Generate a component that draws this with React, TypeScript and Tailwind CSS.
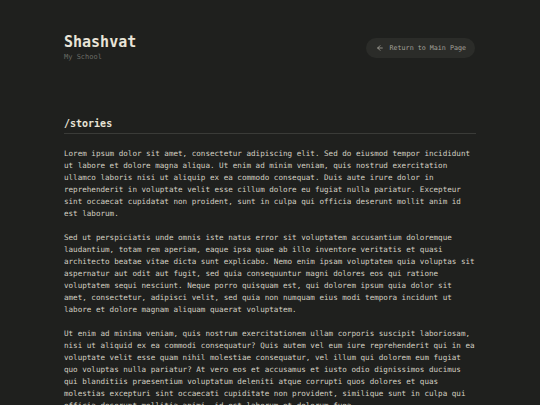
import { ArrowLeft } from "lucide-react";

const paragraphs = [
  "Lorem ipsum dolor sit amet, consectetur adipiscing elit. Sed do eiusmod tempor incididunt ut labore et dolore magna aliqua. Ut enim ad minim veniam, quis nostrud exercitation ullamco laboris nisi ut aliquip ex ea commodo consequat. Duis aute irure dolor in reprehenderit in voluptate velit esse cillum dolore eu fugiat nulla pariatur. Excepteur sint occaecat cupidatat non proident, sunt in culpa qui officia deserunt mollit anim id est laborum.",
  "Sed ut perspiciatis unde omnis iste natus error sit voluptatem accusantium doloremque laudantium, totam rem aperiam, eaque ipsa quae ab illo inventore veritatis et quasi architecto beatae vitae dicta sunt explicabo. Nemo enim ipsam voluptatem quia voluptas sit aspernatur aut odit aut fugit, sed quia consequuntur magni dolores eos qui ratione voluptatem sequi nesciunt. Neque porro quisquam est, qui dolorem ipsum quia dolor sit amet, consectetur, adipisci velit, sed quia non numquam eius modi tempora incidunt ut labore et dolore magnam aliquam quaerat voluptatem.",
  "Ut enim ad minima veniam, quis nostrum exercitationem ullam corporis suscipit laboriosam, nisi ut aliquid ex ea commodi consequatur? Quis autem vel eum iure reprehenderit qui in ea voluptate velit esse quam nihil molestiae consequatur, vel illum qui dolorem eum fugiat quo voluptas nulla pariatur? At vero eos et accusamus et iusto odio dignissimos ducimus qui blanditiis praesentium voluptatum deleniti atque corrupti quos dolores et quas molestias excepturi sint occaecati cupiditate non provident, similique sunt in culpa qui officia deserunt mollitia animi, id est laborum et dolorum fuga.",
];

export default function App() {
  return (
    <div className="h-[405px] overflow-hidden bg-[#1f201e] font-['DejaVu_Sans_Mono',monospace] text-[#d3cfc2]">
      <div className="mx-auto w-[412px] pt-[33px]">
        {/* Header */}
        <div className="flex items-start justify-between">
          <div>
            <h1 className="text-[15px] leading-[18px] font-bold text-[#e8e4d8]">Shashvat</h1>
            <p className="text-[7px] leading-[10px] text-[#6b6c66] mt-[1px]">My School</p>
          </div>
          <button className="mt-[5px] mr-[1px] flex items-center gap-[6px] rounded-full bg-[#2b2c29] h-[20px] pl-[10px] pr-[9px] text-[6.7px] text-[#a3a199]">
            <ArrowLeft className="w-[8px] h-[8px]" strokeWidth={2.5} />
            Return to Main Page
          </button>
        </div>

        {/* Section */}
        <h2 className="mt-[55px] text-[10px] leading-[14px] font-bold text-[#e8e4d8]">/stories</h2>
        <div className="mt-[2px] h-px bg-[#3a3b38]" />

        <div className="mt-[14px] flex flex-col gap-[12px]">
          {paragraphs.map((p, i) => (
            <p key={i} className="text-[7.58px] leading-[12px]">
              {p}
            </p>
          ))}
        </div>
      </div>
    </div>
  );
}
